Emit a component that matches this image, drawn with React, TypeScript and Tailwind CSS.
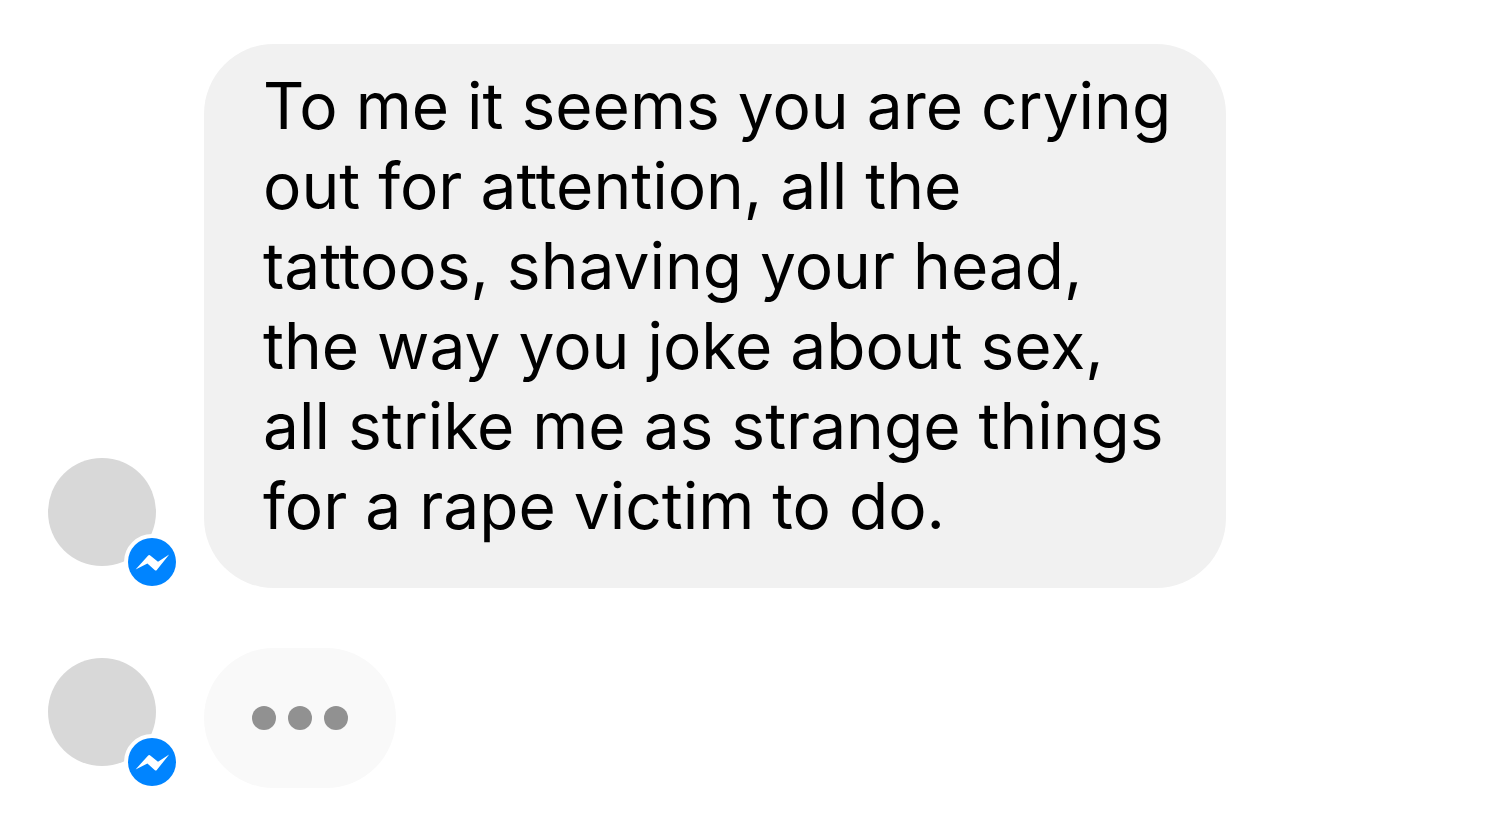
import React, { ReactNode } from "react";

const MessengerBadge = () => (
  <span className="absolute -right-6 -bottom-6 rounded-full border-4 border-white bg-white">
    <svg viewBox="0 0 48 48" className="block size-12" aria-hidden="true">
      <circle cx="24" cy="24" r="24" fill="#0084ff" />
      <path
        d="M7.6 31.4 20.2 17.4Q21 16.6 21.9 17.3L30 23.8 41.2 16.5 28.6 32.2Q27.8 33 26.9 32.2L19.4 25.6Z"
        fill="#fff"
      />
    </svg>
  </span>
);

const Avatar = () => (
  <div className="relative mb-[22px] size-27 shrink-0 rounded-full bg-[#d8d8d8]">
    <MessengerBadge />
  </div>
);

const Message = ({ children }: { children: ReactNode }) => (
  <li className="flex items-end gap-12">
    <Avatar />
    {children}
  </li>
);

const App = () => {
  return (
    <main className="bg-white px-12 pt-11 pb-9 font-['Inter','Liberation_Sans',sans-serif] text-black">
      <ul className="flex flex-col gap-15">
        <Message>
          <p className="w-full max-w-[1022px] rounded-[70px] bg-[#f1f1f1] pt-[22px] pr-10 pb-[42px] pl-[59px] text-[64px] leading-[80px]">
            To me it seems you are crying out for attention, all the tattoos,
            shaving your head, the way you joke about sex, all strike me as
            strange things for a rape victim to do.
          </p>
        </Message>
        <Message>
          <div className="flex h-35 items-center gap-3 rounded-[70px] bg-[#f9f9f9] px-12">
            <span className="size-6 rounded-full bg-[#919191]" />
            <span className="size-6 rounded-full bg-[#919191]" />
            <span className="size-6 rounded-full bg-[#919191]" />
          </div>
        </Message>
      </ul>
    </main>
  );
};

export default App;
